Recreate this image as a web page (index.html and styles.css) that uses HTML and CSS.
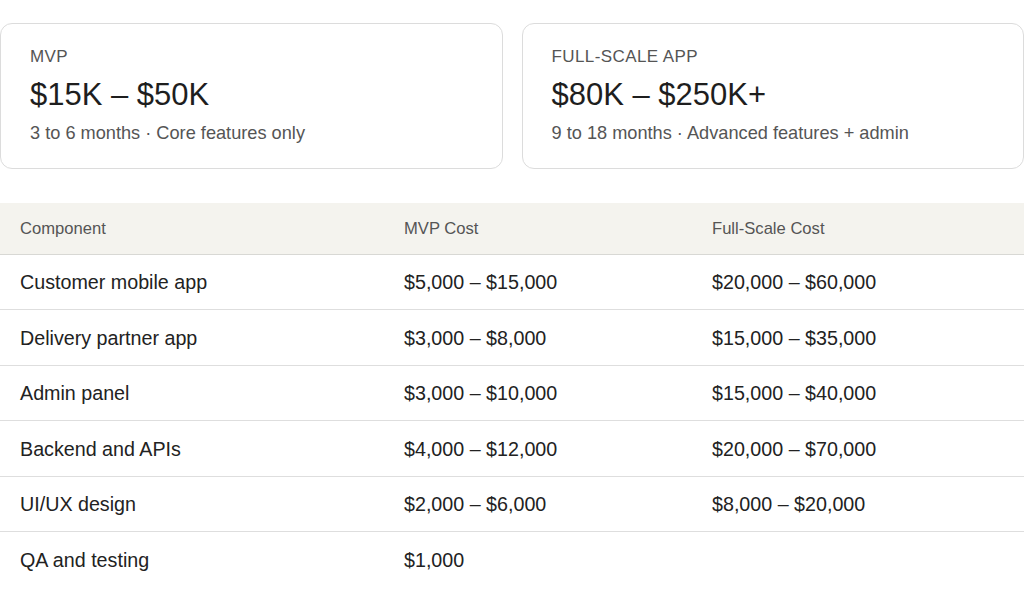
FILE: index.html
```html
<!DOCTYPE html>
<html lang="en">
<head>
    <meta charset="UTF-8">
    <meta name="viewport" content="width=device-width, initial-scale=1.0">
    <title>Food Delivery App Cost</title>
    <link rel="stylesheet" href="styles.css">
</head>
<body>
    <div class="summary">
        <div class="card">
            <p class="card-label">MVP</p>
            <p class="card-price">$15K – $50K</p>
            <p class="card-note">3 to 6 months · Core features only</p>
        </div>
        <div class="card">
            <p class="card-label">FULL-SCALE APP</p>
            <p class="card-price">$80K – $250K+</p>
            <p class="card-note">9 to 18 months · Advanced features + admin</p>
        </div>
    </div>

    <table class="cost-table">
        <thead>
            <tr>
                <th class="col-name">Component</th>
                <th class="col-mvp">MVP Cost</th>
                <th>Full-Scale Cost</th>
            </tr>
        </thead>
        <tbody>
            <tr><td>Customer mobile app</td><td>$5,000 – $15,000</td><td>$20,000 – $60,000</td></tr>
            <tr><td>Delivery partner app</td><td>$3,000 – $8,000</td><td>$15,000 – $35,000</td></tr>
            <tr><td>Admin panel</td><td>$3,000 – $10,000</td><td>$15,000 – $40,000</td></tr>
            <tr><td>Backend and APIs</td><td>$4,000 – $12,000</td><td>$20,000 – $70,000</td></tr>
            <tr><td>UI/UX design</td><td>$2,000 – $6,000</td><td>$8,000 – $20,000</td></tr>
            <tr><td>QA and testing</td><td>$1,000</td><td></td></tr>
        </tbody>
    </table>
</body>
</html>
```

FILE: styles.css
```css
* {
    margin: 0;
    padding: 0;
    box-sizing: border-box;
}
body {
    font-family: "Liberation Sans", Arial, sans-serif;
    background-color: #fff;
    color: #222;
    padding-top: 23px;
}
.summary {
    display: grid;
    grid-template-columns: 1fr 1fr;
    gap: 19px;
}
.card {
    border: 1px solid #dcdcdc;
    border-radius: 12px;
    padding: 23px 29px 21px;
    height: 146px;
}
.card-label {
    font-size: 17px;
    line-height: 20px;
    letter-spacing: 0.4px;
    color: #555;
}
.card-price {
    font-size: 31px;
    line-height: 37px;
    margin-top: 9px;
    color: #1e1e1e;
}
.card-note {
    font-size: 18.2px;
    line-height: 26px;
    margin-top: 7px;
    color: #555;
}
.cost-table {
    width: 100%;
    margin-top: 34px;
    border-collapse: collapse;
    table-layout: fixed;
}
.cost-table th {
    background-color: #f4f3ee;
    color: #555;
    font-weight: normal;
    font-size: 16.6px;
    text-align: left;
    height: 51px;
    padding: 2px 20px 0;
    border-bottom: 1px solid #d8d8d4;
    vertical-align: middle;
}
.cost-table .col-name {
    width: 384px;
}
.cost-table .col-mvp {
    width: 308px;
}
.cost-table td {
    font-size: 19.7px;
    color: #222;
    height: 55.5px;
    padding: 2px 20px 0;
    border-bottom: 1px solid #dedede;
    vertical-align: middle;
}
.cost-table tr:last-child td {
    border-bottom: none;
}
```
